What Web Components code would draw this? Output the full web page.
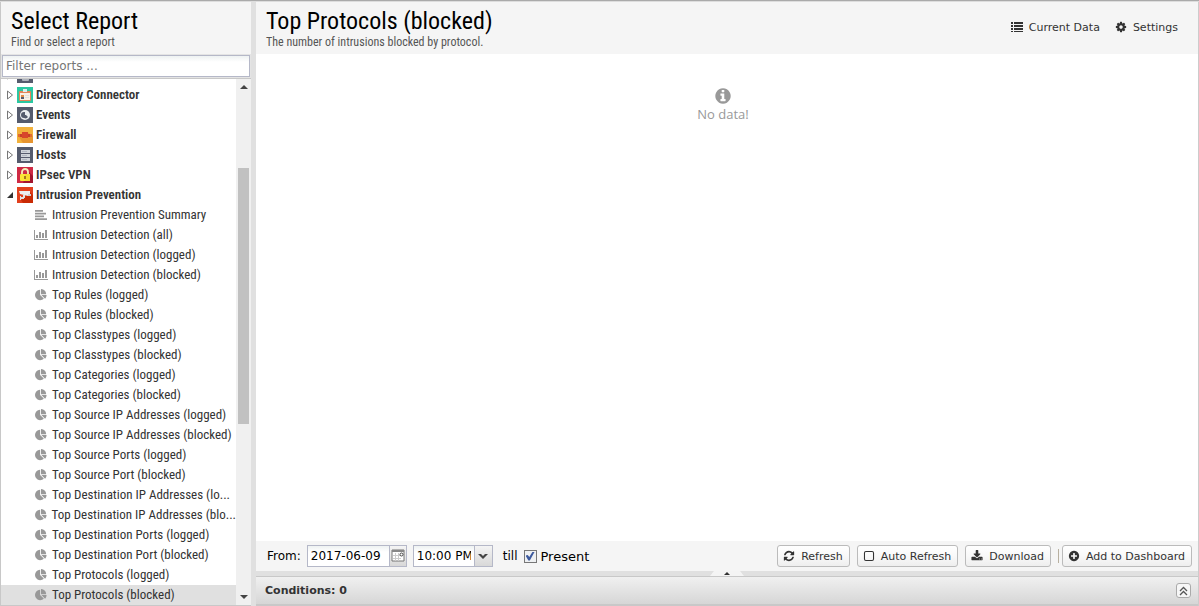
<!DOCTYPE html>
<html lang="en">
<head>
<meta charset="utf-8">
<meta name="viewport" content="width=device-width, initial-scale=1">
<title>Reports</title>
<style>
	html, body { height: 100%; margin: 0; }
	body {
		background: #fff;
		color: #333;
		font-family: "DejaVu Sans", sans-serif;
		font-size: 11px;
		--font-title: "Roboto Condensed", "Liberation Sans Narrow", "Roboto", sans-serif;
		--color-panel: #f5f5f5;
		--color-split: #e0e0e0;
		--color-field: #b5b8c8;
	}
</style>
</head>
<body>
<reports-app></reports-app>

<script>
const icons = {
	refresh: '<path d="M1639 1056q0 5-1 7-64 268-268 434.5t-478 166.5q-146 0-282.5-55t-243.5-157l-129 129q-19 19-45 19t-45-19-19-45v-448q0-26 19-45t45-19h448q26 0 45 19t19 45-19 45l-137 137q71 66 161 102t187 36q134 0 250-65t186-179q11-17 53-117 8-23 30-23h192q13 0 22.5 9.5t9.5 22.5zm25-800v448q0 26-19 45t-45 19h-448q-26 0-45-19t-19-45 19-45l138-138q-148-137-349-137-134 0-250 65t-186 179q-11 17-53 117-8 23-30 23h-199q-13 0-22.5-9.5t-9.5-22.5v-7q65-268 270-434.5t480-166.5q146 0 284 55.5t245 156.5l130-129q19-19 45-19t45 19 19 45z"/>',
	cog: '<path d="M1152 896q0-106-75-181t-181-75-181 75-75 181 75 181 181 75 181-75 75-181zm512-109v222q0 12-8 23t-20 13l-185 28q-19 54-39 91 35 50 107 138 10 12 10 25t-9 23q-27 37-99 108t-94 71q-12 0-26-9l-138-108q-44 23-91 38-16 136-29 186-7 28-36 28h-222q-14 0-24.5-8.5t-11.5-21.5l-28-184q-49-16-90-37l-141 107q-10 9-25 9-14 0-25-11-126-114-165-168-7-10-7-23 0-12 8-23 15-21 51-66.5t54-70.5q-27-50-41-99l-183-27q-13-2-21-12.5t-8-23.5v-222q0-12 8-23t19-13l186-28q14-46 39-92-40-57-107-138-10-12-10-24 0-10 9-23 26-36 98.5-107.5t94.5-71.5q13 0 26 10l138 107q44-23 91-38 16-136 29-186 7-28 36-28h222q14 0 24.5 8.5t11.5 21.5l28 184q49 16 90 37l142-107q9-9 24-9 13 0 25 10 129 119 165 170 7 8 7 22 0 12-8 23-15 21-51 66.5t-54 70.5q26 50 41 98l183 28q13 2 21 12.5t8 23.5z"/>',
	download: '<path d="M1344 1344q0-26-19-45t-45-19-45 19-19 45 19 45 45 19 45-19 19-45zm256 0q0-26-19-45t-45-19-45 19-19 45 19 45 45 19 45-19 19-45zm128-224v320q0 40-28 68t-68 28h-1472q-40 0-68-28t-28-68v-320q0-40 28-68t68-28h465l135 136q58 56 136 56t136-56l136-136h464q40 0 68 28t28 68zm-325-569q17 41-14 70l-448 448q-18 19-45 19t-45-19l-448-448q-31-29-14-70 17-39 59-39h256v-448q0-26 19-45t45-19h256q26 0 45 19t19 45v448h256q42 0 59 39z"/>',
	plus: '<path d="M1344 960v-128q0-26-19-45t-45-19h-256v-256q0-26-19-45t-45-19h-128q-26 0-45 19t-19 45v256h-256q-26 0-45 19t-19 45v128q0 26 19 45t45 19h256v256q0 26 19 45t45 19h128q26 0 45-19t19-45v-256h256q26 0 45-19t19-45zm320-64q0 209-103 385.5t-279.5 279.5-385.5 103-385.5-103-279.5-279.5-103-385.5 103-385.5 279.5-279.5 385.5-103 385.5 103 279.5 279.5 103 385.5z"/>',
	info: '<path d="M1152 1376v-160q0-14-9-23t-23-9h-96v-512q0-14-9-23t-23-9h-320q-14 0-23 9t-9 23v160q0 14 9 23t23 9h96v320h-96q-14 0-23 9t-9 23v160q0 14 9 23t23 9h448q14 0 23-9t9-23zm-128-896v-160q0-14-9-23t-23-9h-192q-14 0-23 9t-9 23v160q0 14 9 23t23 9h192q14 0 23-9t9-23zm640 416q0 209-103 385.5t-279.5 279.5-385.5 103-385.5-103-279.5-279.5-103-385.5 103-385.5 279.5-279.5 385.5-103 385.5 103 279.5 279.5 103 385.5z"/>',
	pie: '<path d="M768 890l546 546q-106 108-247.5 168t-298.5 60q-209 0-385.5-103t-279.5-279.5-103-385.5 103-385.5 279.5-279.5 385.5-103v762zm187 6h773q0 157-60 298.5t-168 247.5zm709-128h-768v-768q209 0 385.5 103t279.5 279.5 103 385.5z"/>',
	square: '<rect x="220" y="220" width="1352" height="1352" rx="220" fill="none" stroke="currentColor" stroke-width="160"/>'
}

// these are drawn on their own pixel grid
const pixelIcons = {
	list: [12, 12, '<path d="M0 1h2v2H0zM3 1h9v2H3zM0 4h2v2H0zM3 4h9v2H3zM0 7h2v2H0zM3 7h9v2H3zM0 10h2v1H0zM3 10h9v1H3z"/>'],
	text: [12, 10, '<path d="M0 0h8v1.700H0zM0 2.800h11v1.700H0zM0 5.600h9v1.700H0zM0 8.300h12V10H0z"/>'],
	chart: [14, 10, '<path d="M0 0h1v9h13v1H0zM2 5h2v3H2zM5 2h2v6H5zM8 3h2v5H8zM11 0h2v8h-2z"/>'],
	right: [6, 10, '<path d="M.5 1v8L5.500 5z" fill="none" stroke="#777"/>'],
	open: [6, 6, '<path d="M6 0v6H0z" fill="#333"/>'],
	up: [8, 4, '<path d="M0 4L4 0l4 4z"/>'],
	down: [8, 4, '<path d="M0 0h8L4 4z"/>'],
	chevron: [10, 6, '<path d="M0 1h3l2 2 2-2h3L5 6z"/>'],
	expand: [9, 10, '<path d="M1 5l3.500-3.500L8 5M1 9l3.500-3.500L8 9" fill="none" stroke="currentColor" stroke-width="1.300"/>'],
	calendar: [14, 14, '<path d="M1 1h12v11H1z" fill="#fff" stroke="#777"/><path d="M1 1h12v2H1z" fill="#888"/><path d="M4.500 4v8M7.500 4v8M2 6.500h8M2 9.500h8" stroke="#ccc"/><circle cx="10.500" cy="5.500" r="1.500" fill="#fff" stroke="#444"/>'],
	dark: [16, 16, '<path d="M0 0h16v16H0z" fill="#555b6d"/><rect x="5" y="4" width="7" height="10" rx="1" fill="#aeb3bd"/>'],
	connector: [16, 16, '<path d="M0 0h16v16H0z" fill="#2bc8a2"/><rect x="2" y="4" width="12" height="10" rx="1" fill="#e2855a"/><rect x="3" y="6" width="10" height="7" fill="#f7efe6"/><path d="M6 2h4v3H6z" fill="#d9ecec"/><path d="M4 8h3v4H4z" fill="#e08a45"/><path d="M4 10h3v2H4z" fill="#555b6d"/><path d="M8 8h4v1H8zM8 10h4v1H8z" fill="#dde0dc"/>'],
	events: [16, 16, '<path d="M0 0h16v16H0z" fill="#555b6d"/><circle cx="8" cy="8" r="5" fill="#eceef1"/><path d="M9 5v3l2 2a3.200 3.200 0 0 1-4 1 3 3 0 0 1 0-6z" fill="#555b6d"/><path d="M8 5h2v3H8z" fill="#eceef1"/>'],
	firewall: [16, 16, '<path d="M0 0h16v16H0z" fill="#f2b13c"/><path d="M10 5l6 4v7H6l-4-6z" fill="#e79530"/><path d="M1 7h14v3H1z" fill="#e26a30"/><path d="M5 5h6v6H5z" fill="#d8452b"/><path d="M3 7h2v3H3zM11 7h2v3h-2z" fill="#c93e27"/>'],
	hosts: [16, 16, '<path d="M0 0h16v16H0z" fill="#555b6d"/><path d="M4 3h9v3H4zM4 7h9v3H4zM4 11h9v3H4z" fill="#cfd4da"/><path d="M5 4h5v1H5zM5 8h5v1H5zM5 12h5v1H5z" fill="#b1b7c2"/>'],
	ipsec: [16, 16, '<path d="M0 0h16v16H0z" fill="#cf2a44"/><path d="M11 4l5 5v7H6z" fill="#a3152e"/><path d="M5 8V5a3 3 0 0 1 6 0v3" fill="none" stroke="#f4ecb8" stroke-width="1.800"/><rect x="3" y="7" width="10" height="7" rx="1" fill="#fbe536"/><path d="M8 7h5v7H8z" fill="#f6d92e"/><path d="M7 9h2v3H7z" fill="#a5761e"/>'],
	intrusion: [16, 16, '<path d="M0 0h16v16H0z" fill="#e2401d"/><path d="M13 5l3 3v8H6l-2-3z" fill="#c92b05"/><path d="M2 4h11v4l-2 1-8-2z" fill="#eceef0"/><path d="M11 7h3v2h-3z" fill="#cfd3d6"/><path d="M6 8h2v3H6zM3 10h4v2H3zM3 9h1v4H3z" fill="#dfe2e4"/>']
}

class UiIcon extends HTMLElement {
	constructor() {
		super()
		this.attachShadow({mode: 'open'})
	}

	connectedCallback() {
		const name = this.getAttribute('name')
		const [width, height, shape] = pixelIcons[name] || [1792, 1792, icons[name]]
		const own = pixelIcons[name] ? `width: ${width}px; height: ${height}px;` : 'width: 12px; height: 12px;'
		this.shadowRoot.innerHTML = `
			<style>
				:host { display: block; flex: none; ${own} }
				svg { display: block; width: 100%; height: 100%; fill: currentColor; }
			</style>
			<svg viewBox="0 0 ${width} ${height}" aria-hidden="true">${shape}</svg>
		`
	}
}
customElements.define('ui-icon', UiIcon)

class UiButton extends HTMLElement {
	constructor() {
		super()
		this.attachShadow({mode: 'open'})
	}

	connectedCallback() {
		this.shadowRoot.innerHTML = `
			<style>
				:host { display: block; }
				button {
					display: flex;
					align-items: center;
					gap: 6px;
					height: 22px;
					padding: 0 6px 0 5px;
					border: 1px solid #bbb;
					border-radius: 3px;
					background: linear-gradient(#fff, #f9f9f9 48%, #eee);
					color: #333;
					font: inherit;
					white-space: nowrap;
					cursor: pointer;
				}
				:host([plain]) button { border-color: transparent; background: none; }
			</style>
			<button type="button"><ui-icon name="${this.getAttribute('icon')}"></ui-icon><span><slot></slot></span></button>
		`
	}
}
customElements.define('ui-button', UiButton)

class PanelHeader extends HTMLElement {
	constructor() {
		super()
		this.attachShadow({mode: 'open'})
		this.shadowRoot.innerHTML = `
			<style>
				:host {
					display: flex;
					align-items: center;
					justify-content: space-between;
					height: 52px;
					padding: 0 10px;
					background: var(--color-panel);
				}
				h1, p { margin: 0; font-family: var(--font-title); font-weight: 400; white-space: nowrap; }
				h1 { color: #000; font-size: 24px; line-height: 28px; }
				p { color: #555; font-size: 12px; line-height: 14px; }
				.tools { display: flex; gap: 2px; padding: 0 3px 2px 0; }
			</style>
			<div>
				<h1><slot name="title"></slot></h1>
				<p><slot name="hint"></slot></p>
			</div>
			<div class="tools"><slot></slot></div>
		`
	}
}
customElements.define('panel-header', PanelHeader)

class TreeRow extends HTMLElement {
	constructor() {
		super()
		this.attachShadow({mode: 'open'})
	}

	connectedCallback() {
		const isGroup = this.hasAttribute('group')
		const arrow = this.hasAttribute('expanded') ? 'open' : 'right'
		this.setAttribute('role', 'treeitem')
		this.shadowRoot.innerHTML = `
			<style>
				:host {
					display: flex;
					align-items: center;
					height: 20px;
					padding-left: 33px;
					color: #333;
					font-family: var(--font-title);
					font-size: 13px;
					line-height: 20px;
					cursor: pointer;
				}
				:host([group]) { padding-left: 6px; font-weight: 600; }
				:host([selected]) { background: #e0e0e0; }
				.arrow { display: flex; width: 10px; }
				.icon { display: flex; justify-content: center; width: 14px; margin-right: 4px; color: #999; }
				:host([group]) .icon { width: 16px; margin-right: 3px; }
				.label { flex: 1; white-space: nowrap; }
			</style>
			${isGroup ? `<span class="arrow"><ui-icon name="${arrow}"></ui-icon></span>` : ''}
			<span class="icon"><ui-icon name="${this.getAttribute('icon')}"></ui-icon></span>
			<span class="label"><slot></slot></span>
		`
	}
}
customElements.define('tree-row', TreeRow)

class ReportTree extends HTMLElement {
	constructor() {
		super()
		this.attachShadow({mode: 'open'})
		this.shadowRoot.innerHTML = `
			<style>
				:host { display: flex; min-height: 0; overflow: hidden; background: #fff; }
				.rows { flex: 1; min-width: 0; overflow: hidden; }
				.bar {
					display: flex;
					flex-direction: column;
					align-items: center;
					width: 15px;
					padding: 6px 0;
					box-sizing: border-box;
					background: #f0f0f0;
					color: #444;
				}
				.track { display: grid; grid-template-rows: 79fr 256fr 171fr; flex: 1; width: 11px; }
				.thumb { grid-row: 2; background: #c1c1c1; }
			</style>
			<div class="rows" role="tree"><slot></slot></div>
			<div class="bar">
				<ui-icon name="up"></ui-icon>
				<div class="track"><div class="thumb"></div></div>
				<ui-icon name="down"></ui-icon>
			</div>
		`
	}

	connectedCallback() {
		// keep the selected report in view
		requestAnimationFrame(() => {
			const $rows = this.shadowRoot.querySelector('.rows')
			$rows.scrollTop = $rows.scrollHeight
		})
	}
}
customElements.define('report-tree', ReportTree)

class ReportSidebar extends HTMLElement {
	constructor() {
		super()
		this.attachShadow({mode: 'open'})
		this.groups = [
			['dark', 'Devices'],
			['connector', 'Directory Connector'],
			['events', 'Events'],
			['firewall', 'Firewall'],
			['hosts', 'Hosts'],
			['ipsec', 'IPsec VPN']
		]
		this.reports = [
			['text', 'Intrusion Prevention Summary'],
			['chart', 'Intrusion Detection (all)'],
			['chart', 'Intrusion Detection (logged)'],
			['chart', 'Intrusion Detection (blocked)'],
			['pie', 'Top Rules (logged)'],
			['pie', 'Top Rules (blocked)'],
			['pie', 'Top Classtypes (logged)'],
			['pie', 'Top Classtypes (blocked)'],
			['pie', 'Top Categories (logged)'],
			['pie', 'Top Categories (blocked)'],
			['pie', 'Top Source IP Addresses (logged)'],
			['pie', 'Top Source IP Addresses (blocked)'],
			['pie', 'Top Source Ports (logged)'],
			['pie', 'Top Source Port (blocked)'],
			['pie', 'Top Destination IP Addresses (lo...'],
			['pie', 'Top Destination IP Addresses (blo...'],
			['pie', 'Top Destination Ports (logged)'],
			['pie', 'Top Destination Port (blocked)'],
			['pie', 'Top Protocols (logged)'],
			['pie', 'Top Protocols (blocked)']
		]
		this.render()
	}

	render() {
		const groups = this.groups.map(([icon, name]) => `<tree-row group icon="${icon}">${name}</tree-row>`)
		const reports = this.reports.map(([icon, name], i) => {
			const selected = i === this.reports.length - 1 ? 'selected' : ''
			return `<tree-row icon="${icon}" ${selected}>${name}</tree-row>`
		})
		this.shadowRoot.innerHTML = `
			<style>
				:host { display: flex; flex-direction: column; min-height: 0; border-left: 1px solid #c8c8c8; border-bottom: 1px solid #c8c8c8; }
				.filter { padding: 1px; background: #e4e4e4; border-bottom: 1px solid #c8c8c8; }
				input {
					display: block;
					box-sizing: border-box;
					width: 100%;
					height: 22px;
					padding: 0 3px;
					border: 1px solid var(--color-field);
					background: linear-gradient(#eef2f2, #fff 6px);
					color: #000;
					font: inherit;
					font-size: 12px;
				}
				input::placeholder { color: #757575; }
				report-tree { flex: 1; }
			</style>
			<panel-header>
				<span slot="title">Select Report</span>
				<span slot="hint">Find or select a report</span>
			</panel-header>
			<div class="filter"><input type="text" placeholder="Filter reports ..." aria-label="Filter reports"></div>
			<report-tree>
				${groups.join('')}
				<tree-row group expanded icon="intrusion">Intrusion Prevention</tree-row>
				${reports.join('')}
			</report-tree>
		`
	}
}
customElements.define('report-sidebar', ReportSidebar)

class TimeRange extends HTMLElement {
	constructor() {
		super()
		this.attachShadow({mode: 'open'})
		this.shadowRoot.innerHTML = `
			<style>
				:host { display: flex; align-items: center; gap: 6px; color: #000; font-size: 12px; }
				.field {
					display: flex;
					box-sizing: border-box;
					height: 22px;
					border: 1px solid var(--color-field);
					background: linear-gradient(#eef2f2, #fff 6px);
				}
				.date { width: 100px; }
				.time { width: 80px; }
				.field input, select {
					appearance: none;
					flex: 1;
					min-width: 0;
					margin: 0;
					padding: 0 3px;
					border: 0;
					border-radius: 0;
					background: none;
					color: #000;
					font: inherit;
				}
				.trigger {
					display: flex;
					align-items: center;
					justify-content: center;
					width: 17px;
					padding: 0;
					border: 0;
					border-left: 1px solid var(--color-field);
					background: linear-gradient(#f4f4f4, #d8d8d8);
					color: #444;
				}
				.present { display: flex; align-items: center; gap: 4px; font-size: 13px; }
				.present input {
					appearance: none;
					display: grid;
					place-items: center;
					width: 13px;
					height: 13px;
					margin: 0;
					border: 1px solid #777;
					background: #eef0f2;
				}
				.present input:checked::before {
					content: "";
					width: 9px;
					height: 9px;
					background: #3d5a9e;
					clip-path: polygon(0 45%, 25% 40%, 42% 62%, 80% 0, 100% 5%, 48% 100%, 32% 100%);
				}
				.till { margin-left: 4px; }
			</style>
			<label for="date">From:</label>
			<span class="field date">
				<input id="date" type="text" value="2017-06-09">
				<button class="trigger" type="button" aria-label="Pick date"><ui-icon name="calendar"></ui-icon></button>
			</span>
			<span class="field time">
				<select aria-label="Start time"><option>10:00 PM</option></select>
				<span class="trigger"><ui-icon name="chevron"></ui-icon></span>
			</span>
			<span class="till">till</span>
			<label class="present"><input type="checkbox" checked>Present</label>
		`
	}
}
customElements.define('time-range', TimeRange)

class ReportView extends HTMLElement {
	constructor() {
		super()
		this.attachShadow({mode: 'open'})
		this.shadowRoot.innerHTML = `
			<style>
				:host { display: flex; flex-direction: column; min-width: 0; border-right: 1px solid #ccc; }
				.chart {
					flex: 1;
					display: flex;
					flex-direction: column;
					align-items: center;
					padding: 33px 8px 0 0;
					background: #fff;
					color: #999;
					font-family: "Open Sans", sans-serif;
					font-size: 13px;
					line-height: 18px;
				}
				.chart ui-icon { width: 18px; height: 18px; }
				.footer {
					display: flex;
					align-items: center;
					justify-content: space-between;
					height: 30px;
					padding: 0 6px 0 11px;
					background: var(--color-panel);
				}
				.actions { display: flex; align-items: center; gap: 7px; }
				.group { display: flex; align-items: center; gap: 3px; }
				.group i { width: 1px; height: 14px; background: #b8b0a0; }
				.split { display: flex; justify-content: center; height: 5px; background: var(--color-split); }
				.grip {
					display: flex;
					align-items: center;
					justify-content: center;
					width: 34px;
					background: #f4f4f4;
					color: #333;
					clip-path: polygon(4px 0, 30px 0, 100% 100%, 0 100%);
				}
				.grip ui-icon { width: 6px; height: 3px; }
				.conditions {
					display: flex;
					align-items: center;
					justify-content: space-between;
					box-sizing: border-box;
					height: 30px;
					padding: 0 7px 0 9px;
					border-top: 1px solid #c8c8c8;
					border-bottom: 2px solid #c8c8c8;
					background: linear-gradient(#f0f0f0, #d6d6d6);
				}
				h2 { margin: 0; font-size: 11px; }
				.conditions button {
					display: grid;
					place-items: center;
					width: 15px;
					height: 15px;
					padding: 0;
					border: 1px solid #aaa;
					border-radius: 3px;
					background: #f6f6f6;
					color: #555;
				}
			</style>
			<panel-header>
				<span slot="title">Top Protocols (blocked)</span>
				<span slot="hint">The number of intrusions blocked by protocol.</span>
				<ui-button plain icon="list">Current Data</ui-button>
				<ui-button plain icon="cog">Settings</ui-button>
			</panel-header>
			<div class="chart"><ui-icon name="info"></ui-icon><span>No data!</span></div>
			<div class="footer">
				<time-range></time-range>
				<div class="actions">
					<ui-button icon="refresh">Refresh</ui-button>
					<ui-button icon="square">Auto Refresh</ui-button>
					<ui-button icon="download">Download</ui-button>
					<div class="group"><i></i><ui-button icon="plus">Add to Dashboard</ui-button></div>
				</div>
			</div>
			<div class="split"><div class="grip"><ui-icon name="up"></ui-icon></div></div>
			<div class="conditions">
				<h2>Conditions: 0</h2>
				<button type="button" aria-label="Expand conditions"><ui-icon name="expand"></ui-icon></button>
			</div>
		`
	}
}
customElements.define('report-view', ReportView)

class ReportsApp extends HTMLElement {
	constructor() {
		super()
		this.attachShadow({mode: 'open'})
		this.shadowRoot.innerHTML = `
			<style>
				:host {
					display: grid;
					grid-template-columns: 251px 5px minmax(0, 1fr);
					grid-template-rows: minmax(0, 1fr);
					box-sizing: border-box;
					height: 100vh;
					border-top: 1px solid #aaa;
					padding-top: 1px;
					background: #ddd;
				}
				.split { background: var(--color-split); }
			</style>
			<report-sidebar></report-sidebar>
			<div class="split"></div>
			<report-view></report-view>
		`
	}
}
customElements.define('reports-app', ReportsApp)
</script>
</body>
</html>
